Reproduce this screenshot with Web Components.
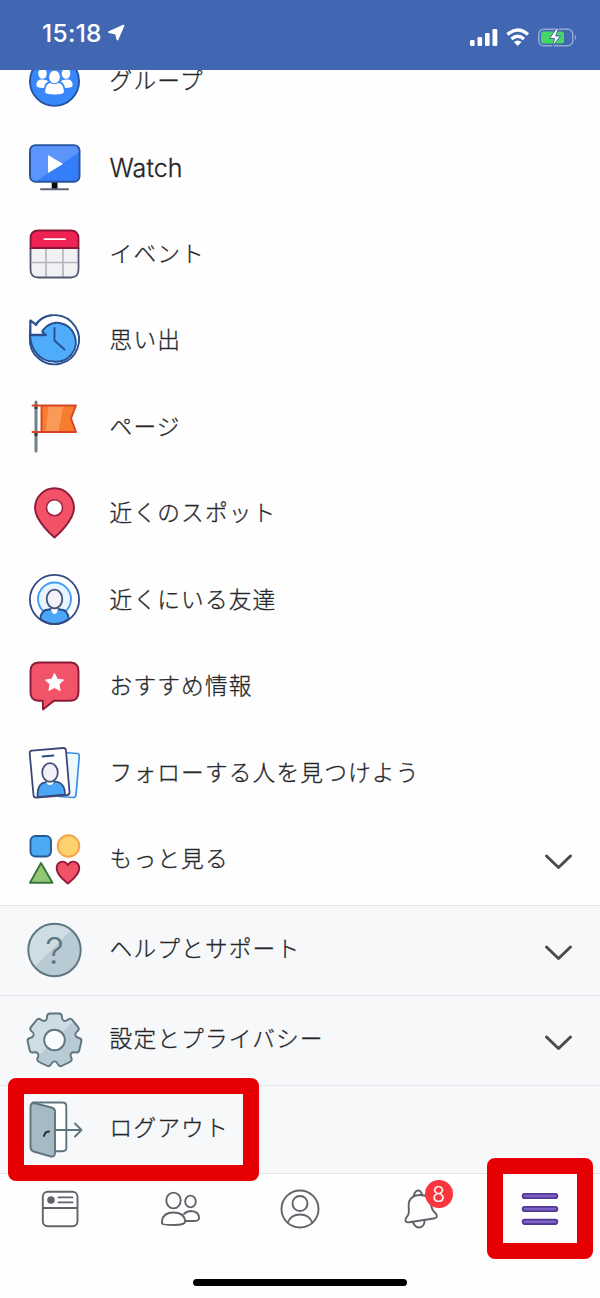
<!DOCTYPE html>
<html lang="ja">
<head>
<meta charset="utf-8">
<title>メニュー</title>
<style>
html,body{margin:0;padding:0;background:#fefefe}
body{font-family:Inter,"Noto Sans CJK JP",sans-serif;color:#25272b}
</style>
</head>
<body>
<app-screen>
  <status-bar slot="status">15:18</status-bar>
  <menu-row icon="groups">グループ</menu-row>
  <menu-row icon="watch" latin>Watch</menu-row>
  <menu-row icon="event">イベント</menu-row>
  <menu-row icon="memories">思い出</menu-row>
  <menu-row icon="page">ページ</menu-row>
  <menu-row icon="spot">近くのスポット</menu-row>
  <menu-row icon="friends">近くにいる友達</menu-row>
  <menu-row icon="recommend">おすすめ情報</menu-row>
  <menu-row icon="follow">フォローする人を見つけよう</menu-row>
  <menu-row icon="more" expandable>もっと見る</menu-row>
  <menu-row slot="footer" icon="help" expandable>ヘルプとサポート</menu-row>
  <menu-row slot="footer" icon="settings" expandable>設定とプライバシー</menu-row>
  <menu-row slot="footer" icon="logout">ログアウト</menu-row>
  <tab-bar slot="tabs"></tab-bar>
  <focus-frame slot="frames" style="left:8px;top:1078px;width:251px;height:103px"></focus-frame>
  <focus-frame slot="frames" style="left:487px;top:1158px;width:106px;height:101px"></focus-frame>
</app-screen>
<script>
// Seven-toothed gear outline around the origin, with rounded tooth corners.
function gearPath() {
  const pts = [];
  for (let i = 0; i < 7; i++) {
    const a = -90 + i * 360 / 7;
    for (const [d, r] of [[-20.5, 21.5], [-15.5, 27.5], [15.5, 27.5], [20.5, 21.5]]) {
      const t = (a + d) * Math.PI / 180;
      pts.push([r * Math.cos(t), r * Math.sin(t)]);
    }
  }
  const n = pts.length, f = v => v.toFixed(2);
  let out = '';
  pts.forEach((p, i) => {
    const toward = q => {
      const dx = q[0] - p[0], dy = q[1] - p[1], l = Math.hypot(dx, dy), k = Math.min(3, l * .48) / l;
      return [p[0] + dx * k, p[1] + dy * k];
    };
    const a = toward(pts[(i + n - 1) % n]), b = toward(pts[(i + 1) % n]);
    out += `${i ? 'L' : 'M'}${f(a[0])} ${f(a[1])}Q${f(p[0])} ${f(p[1])} ${f(b[0])} ${f(b[1])}`;
  });
  return out + 'Z';
}
// Every icon is drawn around the origin.
const ICONS = {
groups: `<circle r="24.6" cy=".3" fill="#3a86fb" stroke="#23539f" stroke-width="1.8"/>
 <g fill="#fff"><ellipse cx="-12" cy="-7.5" rx="4.3" ry="5.2"/><ellipse cx="11.5" cy="-7.5" rx="4.3" ry="5.2"/>
 <path d="M-18 2.5Q-17-2-12-1.5Q-8-1.5-6 .5Q-10 2-10.500 7Q-15 7-17 6Q-18.500 5-18 2.500ZM18 2.500Q17-2 12-1.500Q8-1.500 6 .5Q10 2 10.500 7Q15 7 17 6Q18.500 5 18 2.500Z"/></g>
 <ellipse cx="0" cy="-4" rx="5.800" ry="6.800" fill="#fff" stroke="#3a86fb" stroke-width="1"/>
 <path d="M-9.500 11Q-9 2.500-4 2Q0 4.500 4 2Q9 2.500 9.500 11Q9 13.500 0 13.500T-9.500 11Z" fill="#fff"/>`,
watch: `<rect x="-2.800" y="15" width="5.800" height="7" fill="#080a10"/><path d="M-13.500 22.200H13.500" stroke="#606477" stroke-width="2" stroke-linecap="round"/>
 <rect x="-24.500" y="-21.800" width="49.500" height="36.500" rx="5.500" fill="#347ff9" stroke="#2a559c" stroke-width="2"/>
 <path d="M-19-20.800H19Q24-20.800 24-16V-14.500L-17.500 13.700H-19Q-23.500 13.700-23.500 9V-16Q-23.500-20.800-19-20.800Z" fill="#5b94fb"/><path d="M-6.500-12L8.500-3L-6.500 6Z" fill="#fff"/>`,
event: `<rect x="-24" y="-23.500" width="48" height="47" rx="8" fill="#f1f1f4"/><path d="M-24-6V-15.500Q-24-23.500-16-23.500H16Q24-23.500 24-15.500V-6Z" fill="#ef2353"/>
 <path d="M-8.500-5V23M8.500-5V23M-23 8.500H23" stroke="#b1b2bb" stroke-width="1.600"/>
 <path d="M-24-6V15.500Q-24 23.500-16 23.500H16Q24 23.500 24 15.500V-6" fill="none" stroke="#53586f" stroke-width="1.800"/>
 <path d="M-24-6V-15.500Q-24-23.500-16-23.500H16Q24-23.500 24-15.500V-6Z" fill="none" stroke="#8b1838" stroke-width="1.800"/><path d="M-10-14.800H10.500" stroke="#fff" stroke-width="1.800" stroke-linecap="round"/>`,
memories: `<g stroke="#28508f" stroke-width="1.900" stroke-linejoin="round" stroke-linecap="round"><path d="M-24-19.500L-19-16A24.600 24.600 0 1 1-24.600-2V-5.500Z" fill="#fff"/>
 <path d="M-13-10.500A19.500 19.500 0 1 1-1 21.500C-15 21.500-24 9-24.400-4.800H-9Z" fill="#4facfb"/>
 <path d="M-24-19.500V-5H-8.500L-12.500-9.500Q-6-17 0-17L-5-22Q-14-21-19-16Z" fill="#fff" stroke="none"/>
 <path d="M-18.500-15L-24-19.500V-5.200H-8.500Q-13-7-12-9.500Q-6-16.800 1-17" fill="none"/><path d="M-18.500-15Q-13-23.500-3-24.900" fill="none"/><path d="M0-12V.5L10 9.500" fill="none"/></g>`,
page: `<path d="M-18.500-25V24" stroke="#718087" stroke-width="3" stroke-linecap="round"/><path d="M-18.500-20.500V-18M-18.500 6V9" stroke="#303d43" stroke-width="3"/>
 <path d="M-13-21.500H21.500L16.500-8.500L21.500 5H-13Z" fill="#f77c2e"/><path d="M-6-21H9L4 4.500H-9Z" fill="#f99a58"/>
 <path d="M-13-21.500V5M-22-21.500H21.500L16.500-8.500L21.500 5H-22" fill="none" stroke="#d84422" stroke-width="1.900" stroke-linejoin="round" stroke-linecap="round"/>`,
spot: `<path d="M0 24.500C-3 22-19.500 7-19.500-5A19.500 19.700 0 0 1 19.500-5C19.500 7 3 22 0 24.500Z" fill="#f15268" stroke="#8c1a39" stroke-width="1.900" stroke-linejoin="round"/><circle cy="-5.300" r="8" fill="#fff" stroke="#9a2140" stroke-width="1.600"/>`,
friends: `<circle cy="-.5" r="24.600" fill="#fff"/><circle cy="-1" r="16.500" fill="#e6f5ff" stroke="#449cf4" stroke-width="1.900"/>
 <path d="M-14 19Q-14 10-6 9.500L-3.500 9Q0 15 3.500 9L6 9.500Q14 10 14 19Q8 24 0 24T-14 19Z" fill="#4ba6f7" stroke="#294b88" stroke-width="1.800"/>
 <path d="M-3.500 7Q-3.500 14 0 14T3.500 7" fill="#fff"/><ellipse cy="-1" rx="7.800" ry="9.300" fill="#f2f2f8" stroke="#48517c" stroke-width="1.800"/><circle cy="-.5" r="24.600" fill="none" stroke="#344a83" stroke-width="1.800"/>`,
recommend: `<path d="M-16-23.500H16.500Q24-23 24-15V6Q24 14.500 16 14.800H-.5L-11.500 23.500L-11.800 14.800H-16Q-24 14.500-24 6.500V-15Q-24-23-16-23.500Z" fill="#f15369" stroke="#881b39" stroke-width="1.900" stroke-linejoin="round"/>
 <path d="M0-12.500L2.800-6.800L9-6L4.500-1.700L5.600 4.500L0 1.500L-5.600 4.500L-4.500-1.700L-9-6L-2.800-6.800Z" fill="#fff" stroke="#fff" stroke-width="1" stroke-linejoin="round"/>`,
follow: `<path d="M9-20.500L23-19.500Q25-19 24.800-17L21.500 22Q21.200 24.700 18.500 24.500L5 23.500Z" fill="#eef9ff" stroke="#3990e9" stroke-width="1.700"/>
 <path d="M-22.500-22.300L8.500-25Q11.200-25.200 11.500-22.500L15 19Q15.200 21.700 12.500 22L-18 24.700Q-20.700 24.900-21 22.200L-24.800-19.500Q-25-22-22.500-22.300Z" fill="#fff"/>
 <path d="M-17 24Q-17.500 11-10 9.500L-7.500 9Q-4 13 0 8.500Q10.500 9 10.500 21.500Z" fill="#4ba6f5" stroke="#344a83" stroke-width="1.700"/>
 <path d="M-8 5V8Q-8 12-4.500 12T-.5 8V5Z" fill="#fff"/>
 <ellipse cx="-4.500" cy="-.5" rx="7.800" ry="9.300" fill="#f1f1f7" stroke="#48517b" stroke-width="1.800"/><path d="M-12-16.500L-1-17.500" stroke="#344a83" stroke-width="1.800" stroke-linecap="round"/>
 <path d="M-22.500-22.300L8.500-25Q11.200-25.200 11.500-22.500L15 19Q15.200 21.700 12.500 22L-18 24.700Q-20.700 24.900-21 22.200L-24.800-19.500Q-25-22-22.500-22.300Z" fill="none" stroke="#3c4878" stroke-width="1.800"/>`,
more: `<rect x="-24" y="-23" width="20.500" height="20.500" rx="5" fill="#4aabf4" stroke="#26598f" stroke-width="1.900"/><circle cx="14" cy="-13" r="10.800" fill="#fdd16c" stroke="#f3a34b" stroke-width="1.900"/>
 <path d="M-13.500 4L-2 23.700H-24.500Z" fill="#91c874" stroke="#38743b" stroke-width="1.900" stroke-linejoin="round"/>
 <path d="M13.300 24.500C9 21 2.200 16 2.200 9.500C2.200 2 10 .5 13.300 6C16.500 .5 24.700 2 24.700 9.500C24.700 16 17.500 21 13.300 24.500Z" fill="#f25268" stroke="#911a3d" stroke-width="1.900" stroke-linejoin="round"/>`,
help: `<circle r="26.200" fill="#b8cad3"/><path d="M-20 17A26.200 26.200 0 0 1 17-20Z" fill="#cedce3"/><circle r="26.200" fill="none" stroke="#5e7580" stroke-width="1.900"/>
 <text x="0" y="14" text-anchor="middle" font-family="Inter" font-weight="300" font-size="37" fill="#5e7580">?</text>`,
settings: `<clipPath id="g"><path d="${gearPath()}"/></clipPath><path d="${gearPath()}" fill="#b8cad3"/><path clip-path="url(#g)" d="M-28 28V-28H28Z" fill="#cedce3"/>
 <path d="${gearPath()}" fill="none" stroke="#5e7580" stroke-width="1.900" stroke-linejoin="round"/><circle r="10.300" fill="#fafbfd" stroke="#5e7580" stroke-width="1.900"/>`,
logout: `<g stroke="#5e7580" stroke-width="1.900" stroke-linejoin="round" stroke-linecap="round"><path d="M-22-26.500H8Q11.800-26.500 11.800-23V18.500Q11.800 22.200 8 22.200H-2" fill="#fff"/>
 <path d="M-20.500-26Q-24-26-24-22V18Q-24 21.500-21 22.500L-3.500 27.500Q.5 28 .5 24V-17.500Q.5-20.500-3-21.500Z" fill="#a6bac4"/><path d="M.5 1H27M20.500-5.500L27 1L20.500 7.500" fill="none"/></g>
 <path d="M-10.500 7Q-9.500 2.500-5.500 2.500" fill="none" stroke="#252d33" stroke-width="2" stroke-linecap="round"/>`,
feed: `<rect x="-17.200" y="-17.300" width="34.700" height="34.500" rx="5"/><path d="M-17-1H17M-1.500-11.600H12.500M-1.500-6.600H12.500"/><circle cx="-9" cy="-9" r="3.800" fill="#606369" stroke="none"/>`,
people: `<ellipse cx="-6.500" cy="-8.500" rx="7.200" ry="7.900"/><ellipse cx="10.500" cy="-7.500" rx="5.300" ry="5.900"/>
 <path d="M-18 12Q-17 3.500-6.500 3.500T5.200 12Q5.500 16-6 16T-18 14.500ZM4 5Q7 2 11 2Q19 2.500 19 9Q19.500 12 13 12H5"/>`,
profile: `<circle cy="0" r="18.500"/><circle cy="-5.500" r="7.500"/><path d="M-12.300 13.500Q-9 5.500 0 5.500T12.300 13.500"/>`,
bell: `<g transform="translate(1.200 0)"><path d="M-7.500-13.500Q-6-18.500-3-18.500T1-13.500"/><path d="M-5.500-13.500Q-12-11-12.500-5C-12.500 4-11.500 4-14.500 8C-17 12-15.500 13.500-12 13.300L12.500 9.500Q17 9 15 5C11 1 10.500 0 9.500-6Q8-14-.5-14Q-3.500-14-5.500-13.500Z"/><path d="M-8.500 13Q-6 18.500-2 18.500Q3 18 3.500 11.500"/></g>`,
burger: `<path d="M-15.200-13H15.200M-15.200 0H15.200M-15.200 12.800H15.200" stroke="#503b91" stroke-width="6.200" stroke-linecap="round"/><path d="M-15.200-13H15.200M-15.200 0H15.200M-15.200 12.800H15.200" stroke="#8061ca" stroke-width="2.600" stroke-linecap="round"/>`
};
function define(name, build) {
  customElements.define(name, class extends HTMLElement {
    constructor() { super(); this.attachShadow({mode: 'open'}); }
    connectedCallback() { this.shadowRoot.innerHTML = build(this); }
  });
}
define('app-icon', el => `<style>:host{display:block;width:60px;height:60px;flex:none}svg{display:block;overflow:visible}</style>
<svg width="60" height="60" viewBox="${el.hasAttribute('line') ? '-30' : '-30.500'} -30 60 60" fill="${el.hasAttribute('line') ? 'none' : 'currentColor'}" ${el.hasAttribute('line') ? 'stroke="#606369" stroke-width="1.900" stroke-linecap="round" stroke-linejoin="round"' : ''}>${ICONS[el.getAttribute('name')]}</svg>`);
define('app-screen', () => `<style>
:host{display:flex;flex-direction:column;position:relative;width:600px;height:1298px;overflow:hidden;background:#fefefe}
main{height:835px;flex:none;overflow:hidden;display:flex;flex-direction:column}
.list{flex:none;display:grid;grid-auto-rows:86.450px;margin-top:-32.200px}
footer{flex:none;display:grid;grid-template-rows:90px 90px 88px;background:#f7f8fa}
::slotted([slot=footer]){border-top:1px solid #e5e6e9;padding-bottom:2px}
</style><slot name="status"></slot><main><div class="list"><slot></slot></div></main><footer><slot name="footer"></slot></footer><slot name="tabs"></slot><slot name="frames"></slot>`);
define('status-bar', () => `<style>
:host{height:70px;flex:none;box-sizing:border-box;background:#4267b2;color:#fff;display:flex;align-items:center;padding:0 23px 2px 42px}
b{font-size:24.500px;font-weight:500;letter-spacing:.3px;width:60px;margin-top:-2px;white-space:nowrap}.loc{margin-left:6px;margin-top:-3px}.sys{margin-left:auto;margin-top:7px}svg{display:block}
</style><b><slot></slot></b>
<svg class="loc" width="17" height="18" viewBox="0 0 17 18"><path d="M1 8L15.500 1.700L9.500 15.500L8 9.500Z" fill="#fff" stroke="#fff" stroke-width="1.800" stroke-linejoin="round"/></svg>
<svg class="sys" width="108" height="20" viewBox="0 0 108 20"><g fill="#fff"><rect x="1" y="12" width="4.600" height="6" rx="1.200"/><rect x="8.500" y="9" width="4.600" height="9" rx="1.200"/><rect x="16" y="5" width="4.600" height="13" rx="1.200"/><rect x="23.500" y="1" width="4.800" height="17" rx="1.200"/></g>
<path d="M38.500 6.500Q48.700-2.500 59 6.500M42.500 11Q48.700 5.500 55 11" fill="none" stroke="#fff" stroke-width="3.400"/><path d="M44.900 14Q48.700 11 52.500 14L48.700 18Z" fill="#fff"/>
<rect x="69.800" y="1.300" width="34" height="16.500" rx="5" fill="none" stroke="#93a9d5" stroke-width="1.500"/><path d="M106 6.500Q108.500 9.500 106 12.500Z" fill="#93a9d5"/><rect x="72" y="3.500" width="23" height="12" rx="2.500" fill="#47d764"/>
<path d="M87.500 .5L80.500 10.500H85.500L83.500 18.500L91.500 8H86.700L89.500 .5Z" fill="#fff" stroke="#4267b2" stroke-width="1"/></svg>`);
define('menu-row', el => `<style>
:host{box-sizing:border-box;display:flex;align-items:center;padding:0 26px 0 24px}
span{margin-left:25.600px;padding-bottom:2px;font-size:22.700px;line-height:30px;white-space:nowrap;letter-spacing:1.150px;font-weight:300;-webkit-text-stroke:.3px currentColor;font-family:"Noto Sans CJK JP",sans-serif}
:host([latin]) span{font:300 25px/30px Inter,sans-serif;letter-spacing:.1px;padding:1px 0 0}
:host([slot=footer]) span{padding-bottom:4px}
.v{margin-left:auto;margin-top:7px}
</style><app-icon name="${el.getAttribute('icon')}"></app-icon><span><slot></slot></span>${el.hasAttribute('expandable') ? '<svg class="v" width="31" height="18" viewBox="0 0 31 18"><path d="M3.500 3L15.500 14.500L27.500 3" fill="none" stroke="#4b4b4d" stroke-width="3" stroke-linecap="round" stroke-linejoin="round"/></svg>' : ''}`);
define('tab-bar', () => `<style>
:host{flex:1;box-sizing:border-box;background:#fefefe;border-top:1px solid #e2e4e7;display:flex;flex-direction:column;align-items:center;padding-top:4.500px}
nav{width:100%;display:grid;grid-template-columns:repeat(5,120px);justify-items:center}
.n{position:relative}.badge{position:absolute;left:34.500px;top:1px;width:28.500px;height:28.500px;border-radius:50%;background:#f9363d;color:#fff;font:300 21px/29px Inter,sans-serif;text-align:center}
.home{width:214px;height:7px;border-radius:4px;background:#000;margin-top:40.500px}
</style><nav><app-icon line name="feed"></app-icon><app-icon line name="people"></app-icon><app-icon line name="profile"></app-icon>
<div class="n"><app-icon line name="bell"></app-icon><div class="badge">8</div></div><app-icon line name="burger"></app-icon></nav><div class="home"></div>`);
define('focus-frame', () => `<style>:host{position:absolute;box-sizing:border-box;border:16.500px solid #e60003;border-radius:8px;pointer-events:none}</style>`);
</script>
</body>
</html>
